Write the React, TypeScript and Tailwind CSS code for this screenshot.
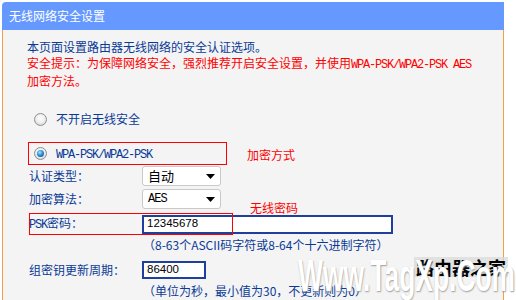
import React from "react";

function M({ children }: { children: React.ReactNode }) {
  return (
    <span className="font-['Liberation_Mono',monospace] text-[12px] tracking-[-1.2px]">
      {children}
    </span>
  );
}

function Radio({ checked }: { checked?: boolean }) {
  return (
    <span className="flex h-[13px] w-[13px] shrink-0 items-center justify-center rounded-full border border-[#8d8f90] bg-[radial-gradient(circle_at_50%_40%,#ffffff_0%,#ececec_55%,#c4c4c4_100%)]">
      {checked && (
        <span className="h-[7px] w-[7px] rounded-full bg-[radial-gradient(circle_at_40%_35%,#a8e6ff_0%,#2c90d8_45%,#0b3c78_100%)]" />
      )}
    </span>
  );
}

function Select({ value, mono }: { value: string; mono?: boolean }) {
  return (
    <div className="flex h-[20px] w-[79px] shrink-0 items-center justify-between rounded-[3px] border border-[#c9c9c9] bg-white pl-[5px] pr-[5px]">
      <span className={mono ? "font-['Liberation_Mono',monospace] text-[12px] tracking-[-1px] text-black" : "text-[13px] text-black"}>
        {value}
      </span>
      <svg width="9" height="5" viewBox="0 0 9 5">
        <path d="M0 0h9L4.5 5z" fill="#000" />
      </svg>
    </div>
  );
}

export default function App() {
  return (
    <div className="relative h-[300px] w-[516px] overflow-hidden bg-white font-['Noto_Sans_CJK_SC',sans-serif] text-[12px]">
      <div className="ml-[2px] w-[502px]">
        <div className="mt-[2px] flex h-[28px] items-center rounded-tl-[4px] bg-[#6699ff] pl-[7px] text-[12px] text-white">
          无线网络安全设置
        </div>
        <div className="h-[272px] border-l border-r border-[#f5a040] bg-[#f4f4f4]">
          <div className="whitespace-nowrap pl-[24px] pt-[9px] leading-[16px]">
            <div className="text-[#0a3a96]">本页面设置路由器无线网络的安全认证选项。</div>
            <div className="text-[#ff0000]">
              安全提示：为保障网络安全，强烈推荐开启安全设置，并使用<M>WPA-PSK/WPA2-PSK AES</M>
            </div>
            <div className="text-[#ff0000]">加密方法。</div>
          </div>

          <div className="mt-[20px] flex h-[20px] items-center pl-[31px] text-[#0a3a96]">
            <Radio />
            <span className="ml-[9px] text-[12px]">不开启无线安全</span>
          </div>

          <div className="mt-[13px] flex items-center">
            <div className="ml-[25px] flex h-[23px] w-[199px] items-center border border-[#ff0000] pl-[5px]">
              <Radio checked />
              <span className="ml-[9px] text-[#0a3a96]">
                <M>WPA-PSK/WPA2-PSK</M>
              </span>
            </div>
            <span className="ml-[20px] pt-[2px] text-[12px] text-[#ff0000]">加密方式</span>
          </div>

          <div className="mt-[1px] flex h-[20px] items-center pl-[26px]">
            <span className="w-[113px] text-[12px] text-[#0a3a96]">认证类型：</span>
            <Select value="自动" />
          </div>

          <div className="mt-[3px] flex h-[20px] items-center pl-[26px]">
            <span className="w-[113px] text-[12px] text-[#0a3a96]">加密算法：</span>
            <Select value="AES" mono />
            <span className="relative top-[9px] ml-[29px] text-[12px] text-[#ff0000]">无线密码</span>
          </div>

          <div className="relative ml-[26px] mt-[4px] flex h-[22px] items-center">
            <span className="w-[113px] text-[12px] text-[#0a3a96]">
              <M>PSK</M>密码：
            </span>
            <div className="flex h-[19px] w-[251px] items-center border-2 border-[#1f3f9c] bg-white pl-[3px] font-['Liberation_Sans',sans-serif] text-[11.5px] text-black">
              12345678
            </div>
            <div className="pointer-events-none absolute left-0 top-0 h-[22px] w-[204px] border border-[#ff0000]" />
          </div>

          <div className="mt-[2px] pl-[140px] leading-[16px] text-[#0a3a96]">
            （8-63个ASCII码字符或8-64个十六进制字符）
          </div>

          <div className="mt-[8px] flex h-[18px] items-center pl-[26px]">
            <span className="w-[113px] text-[12px] text-[#0a3a96]">组密钥更新周期：</span>
            <div className="flex h-[18px] w-[64px] items-center border-2 border-[#1f3f9c] bg-white pl-[3px] font-['Liberation_Sans',sans-serif] text-[11.5px] text-black">
              86400
            </div>
          </div>

          <div className="mt-[4px] pl-[140px] leading-[16px] text-[#0a3a96]">
            （单位为秒，最小值为30，不更新则为0）
          </div>
        </div>
      </div>

      <div className="absolute left-[414px] top-[257px] bg-[#d9d9d9]/70 px-[2px] text-[18px] font-bold leading-[20px] text-black">
        路由器之家
      </div>
      <div className="absolute left-[298px] top-[252px] origin-left scale-x-[0.6] whitespace-nowrap font-['Liberation_Sans',sans-serif] text-[44px] font-bold leading-[48px] text-white [text-shadow:1px_1px_2px_#9a9a9a]">
        Www.TagXp.Com
      </div>
    </div>
  );
}
